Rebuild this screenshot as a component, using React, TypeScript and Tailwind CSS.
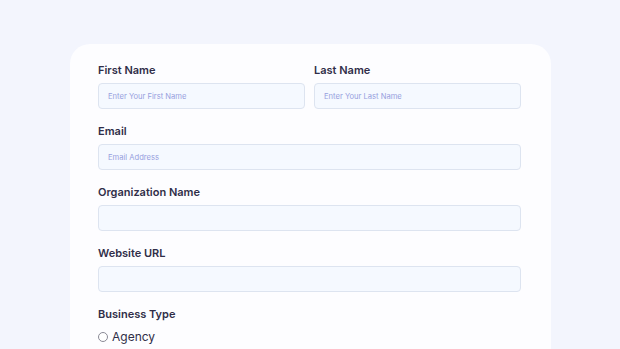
import React from "react";

function Field({ label, placeholder }: { label: string; placeholder?: string }) {
  return (
    <div className="flex flex-col gap-[6px]">
      <label className="text-[11px] leading-[14px] font-semibold text-[#302e48]">{label}</label>
      <div className="h-[26px] rounded-[4px] border border-[#dde4f0] bg-[#f5f9ff] flex items-center px-[9px] pt-[2px]">
        {placeholder ? (
          <span className="text-[7.6px] text-[#97a0de]">{placeholder}</span>
        ) : null}
      </div>
    </div>
  );
}

export default function App() {
  return (
    <div
      className="w-[620px] h-[349px] overflow-hidden bg-[#f3f5fd] pt-[44px] pl-[70px]"
      style={{ fontFamily: "Inter, 'Noto Sans', sans-serif" }}
    >
      <div className="w-[481px] h-[330px] rounded-t-[20px] bg-[#fdfdff] pt-[19px] pl-[28px] pr-[30px] flex flex-col gap-[15px]">
        <div className="grid grid-cols-2 gap-[9px]">
          <Field label="First Name" placeholder="Enter Your First Name" />
          <Field label="Last Name" placeholder="Enter Your Last Name" />
        </div>
        <Field label="Email" placeholder="Email Address" />
        <Field label="Organization Name" />
        <Field label="Website URL" />
        <div className="flex flex-col gap-[9px]">
          <label className="text-[11px] leading-[14px] font-semibold text-[#302e48]">Business Type</label>
          <div className="flex items-center gap-[4px]">
            <span className="w-[10px] h-[10px] rounded-full border border-[#8a8a96] bg-white" />
            <span className="text-[12px] leading-[14px] text-[#302e48]">Agency</span>
          </div>
        </div>
      </div>
    </div>
  );
}
